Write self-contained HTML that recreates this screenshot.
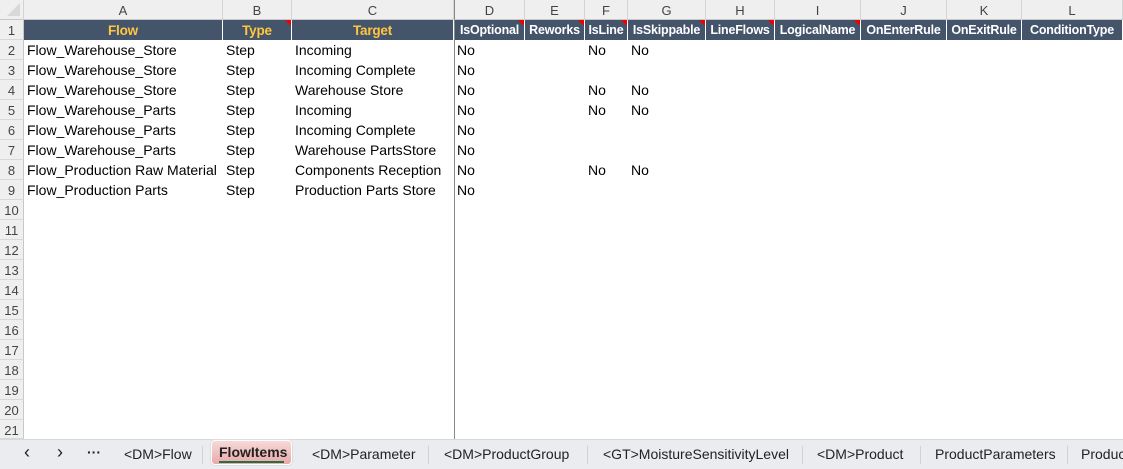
<!DOCTYPE html>
<html><head><meta charset="utf-8"><style>
*{margin:0;padding:0;box-sizing:border-box}
body{width:1123px;height:469px;overflow:hidden;background:#fff;font-family:"Liberation Sans",sans-serif;font-size:14px;color:#000;position:relative}
.colh{position:absolute;top:0;height:20px;background:#efefef;border-right:1px solid #d4d4d4;border-bottom:1px solid #c8c8c8;text-align:center;line-height:21px;color:#444;font-size:13px}
.rowh{position:absolute;left:0;width:24px;height:20px;background:#efefef;border-bottom:1px solid #d8d8d8;border-right:1px solid #c8c8c8;text-align:center;line-height:21px;color:#444;font-size:13px}
.hd{position:absolute;top:20px;height:20px;background:#44546a;border-right:1px solid #fff;text-align:center;line-height:21px;font-weight:bold;color:#fff;font-size:12.5px;overflow:hidden;letter-spacing:-0.2px}
.hd.g{color:#ffc640;font-size:13.5px}
.tri{position:absolute;top:0;right:0;width:0;height:0;border-top:6px solid #e00;border-left:6px solid transparent}
.c{position:absolute;height:20px;line-height:21px;white-space:nowrap}
.tab{position:absolute;top:446px;font-size:14px;color:#222;white-space:nowrap}
.sep{position:absolute;top:446px;width:1px;height:18px;background:#cfd2d6}
</style></head><body>
<div class="colh" style="left:0;width:24px"><div style="position:absolute;right:3px;bottom:3px;width:0;height:0;border-bottom:13px solid #d8d8d8;border-left:13px solid transparent"></div></div>
<div class="colh" style="left:24px;width:199px">A</div>
<div class="colh" style="left:223px;width:69px">B</div>
<div class="colh" style="left:292px;width:162px">C</div>
<div class="colh" style="left:454px;width:71px;border-left:1px solid #888">D</div>
<div class="colh" style="left:525px;width:60px">E</div>
<div class="colh" style="left:585px;width:43px">F</div>
<div class="colh" style="left:628px;width:78px">G</div>
<div class="colh" style="left:706px;width:69px">H</div>
<div class="colh" style="left:775px;width:86px">I</div>
<div class="colh" style="left:861px;width:86px">J</div>
<div class="colh" style="left:947px;width:75px">K</div>
<div class="colh" style="left:1022px;width:101px">L</div>

<div class="hd g" style="left:24px;width:199px">Flow</div>
<div class="hd g" style="left:223px;width:69px">Type<span class="tri"></span></div>
<div class="hd g" style="left:292px;width:162px">Target</div>
<div class="hd" style="left:455px;width:70px">IsOptional<span class="tri"></span></div>
<div class="hd" style="left:525px;width:60px">Reworks<span class="tri"></span></div>
<div class="hd" style="left:585px;width:43px">IsLine<span class="tri"></span></div>
<div class="hd" style="left:628px;width:78px">IsSkippable<span class="tri"></span></div>
<div class="hd" style="left:706px;width:69px">LineFlows<span class="tri"></span></div>
<div class="hd" style="left:775px;width:86px">LogicalName<span class="tri"></span></div>
<div class="hd" style="left:861px;width:86px">OnEnterRule</div>
<div class="hd" style="left:947px;width:75px">OnExitRule</div>
<div class="hd" style="left:1022px;width:101px">ConditionType</div>

<div style="position:absolute;left:454px;top:20px;width:1px;height:419px;background:#888"></div>

<div class="rowh" style="top:20px">1</div>
<div class="rowh" style="top:40px">2</div>
<div class="rowh" style="top:60px">3</div>
<div class="rowh" style="top:80px">4</div>
<div class="rowh" style="top:100px">5</div>
<div class="rowh" style="top:120px">6</div>
<div class="rowh" style="top:140px">7</div>
<div class="rowh" style="top:160px">8</div>
<div class="rowh" style="top:180px">9</div>
<div class="rowh" style="top:200px">10</div>
<div class="rowh" style="top:220px">11</div>
<div class="rowh" style="top:240px">12</div>
<div class="rowh" style="top:260px">13</div>
<div class="rowh" style="top:280px">14</div>
<div class="rowh" style="top:300px">15</div>
<div class="rowh" style="top:320px">16</div>
<div class="rowh" style="top:340px">17</div>
<div class="rowh" style="top:360px">18</div>
<div class="rowh" style="top:380px">19</div>
<div class="rowh" style="top:400px">20</div>
<div class="rowh" style="top:420px;height:19px">21</div>

<div class="c" style="left:27px;top:40px">Flow_Warehouse_Store</div>
<div class="c" style="left:27px;top:60px">Flow_Warehouse_Store</div>
<div class="c" style="left:27px;top:80px">Flow_Warehouse_Store</div>
<div class="c" style="left:27px;top:100px">Flow_Warehouse_Parts</div>
<div class="c" style="left:27px;top:120px">Flow_Warehouse_Parts</div>
<div class="c" style="left:27px;top:140px">Flow_Warehouse_Parts</div>
<div class="c" style="left:27px;top:160px">Flow_Production Raw Material</div>
<div class="c" style="left:27px;top:180px">Flow_Production Parts</div>
<div class="c" style="left:226px;top:40px">Step</div>
<div class="c" style="left:226px;top:60px">Step</div>
<div class="c" style="left:226px;top:80px">Step</div>
<div class="c" style="left:226px;top:100px">Step</div>
<div class="c" style="left:226px;top:120px">Step</div>
<div class="c" style="left:226px;top:140px">Step</div>
<div class="c" style="left:226px;top:160px">Step</div>
<div class="c" style="left:226px;top:180px">Step</div>
<div class="c" style="left:295px;top:40px">Incoming</div>
<div class="c" style="left:295px;top:60px">Incoming Complete</div>
<div class="c" style="left:295px;top:80px">Warehouse Store</div>
<div class="c" style="left:295px;top:100px">Incoming</div>
<div class="c" style="left:295px;top:120px">Incoming Complete</div>
<div class="c" style="left:295px;top:140px">Warehouse PartsStore</div>
<div class="c" style="left:295px;top:160px">Components Reception</div>
<div class="c" style="left:295px;top:180px">Production Parts Store</div>
<div class="c" style="left:457px;top:40px">No</div>
<div class="c" style="left:457px;top:60px">No</div>
<div class="c" style="left:457px;top:80px">No</div>
<div class="c" style="left:457px;top:100px">No</div>
<div class="c" style="left:457px;top:120px">No</div>
<div class="c" style="left:457px;top:140px">No</div>
<div class="c" style="left:457px;top:160px">No</div>
<div class="c" style="left:457px;top:180px">No</div>
<div class="c" style="left:588px;top:40px">No</div>
<div class="c" style="left:588px;top:80px">No</div>
<div class="c" style="left:588px;top:100px">No</div>
<div class="c" style="left:588px;top:160px">No</div>
<div class="c" style="left:631px;top:40px">No</div>
<div class="c" style="left:631px;top:80px">No</div>
<div class="c" style="left:631px;top:100px">No</div>
<div class="c" style="left:631px;top:160px">No</div>

<div style="position:absolute;left:0;top:439px;width:1123px;height:30px;background:#eaecef;border-top:1px solid #d6d8db"></div>
<div class="tab" style="left:24px;font-size:18px;top:442px">&lsaquo;</div>
<div class="tab" style="left:57px;font-size:18px;top:442px">&rsaquo;</div>
<div class="tab" style="left:87px;font-weight:bold;top:444px">···</div>
<div class="tab" style="left:124px">&lt;DM&gt;Flow</div>
<div class="sep" style="left:202px"></div>
<div style="position:absolute;left:211px;top:440px;width:81px;height:25px;border-radius:4px;background:linear-gradient(#f7d9d9,#e9a9a9);border:1px solid #fff;box-shadow:0 0 0 1px #ddd"></div>
<div class="tab" style="left:219px;top:444px;font-weight:bold;color:#222">FlowItems</div>
<div style="position:absolute;left:219px;top:461px;width:65px;height:2px;background:#217346"></div>
<div class="tab" style="left:312px">&lt;DM&gt;Parameter</div>
<div class="sep" style="left:428px"></div>
<div class="tab" style="left:444px">&lt;DM&gt;ProductGroup</div>
<div class="sep" style="left:587px"></div>
<div class="tab" style="left:603px">&lt;GT&gt;MoistureSensitivityLevel</div>
<div class="sep" style="left:802px"></div>
<div class="tab" style="left:817px">&lt;DM&gt;Product</div>
<div class="sep" style="left:920px"></div>
<div class="tab" style="left:935px">ProductParameters</div>
<div class="sep" style="left:1067px"></div>
<div class="tab" style="left:1081px">Product</div>
</body></html>
